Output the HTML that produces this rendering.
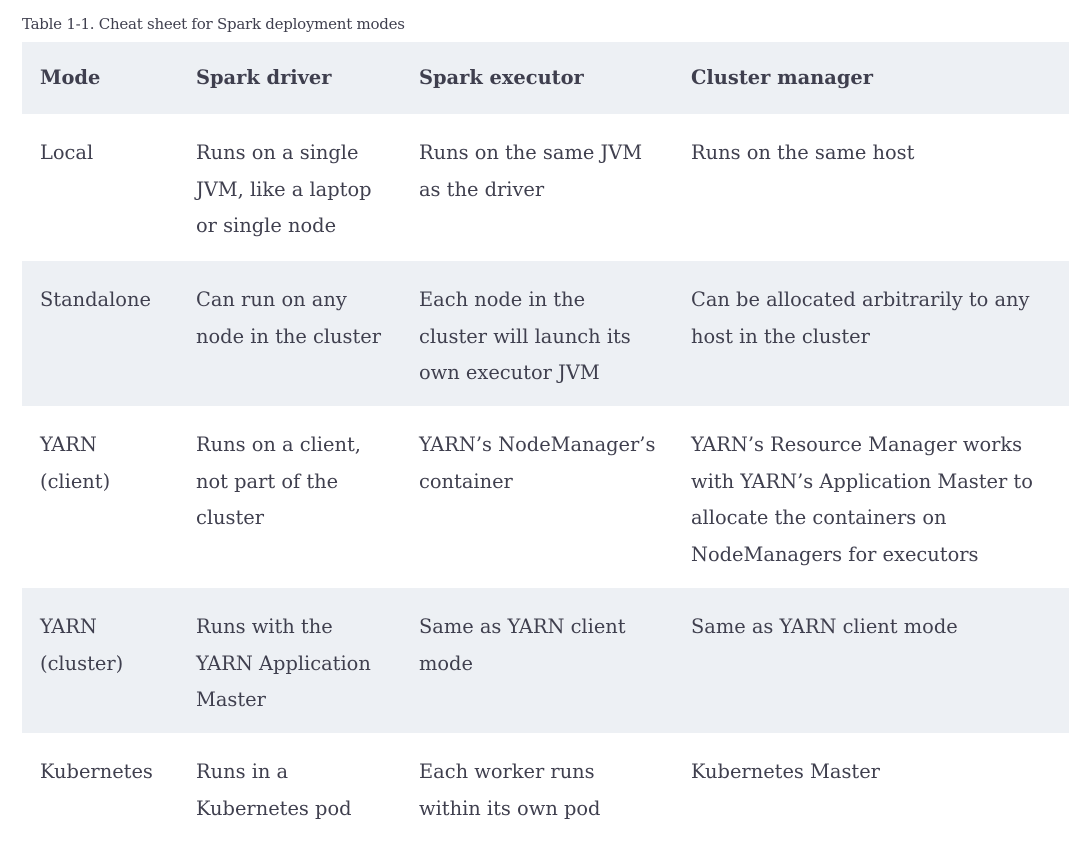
<!DOCTYPE html>
<html><head><meta charset="utf-8"><style>
html,body{margin:0;padding:0;background:#fff;width:1092px;height:847px;overflow:hidden}
body{font-family:"DejaVu Serif","Liberation Serif",serif;color:#3f3f4e}
.cap{position:absolute;left:22px;top:15px;font-size:15px;letter-spacing:-0.25px;white-space:nowrap}
.row{position:absolute;left:22px;width:1047px}
.row.g{background:#edf0f4}
.c{position:absolute;top:21px;font-size:19.4px;line-height:36.5px;white-space:nowrap;letter-spacing:0}
.h .c{font-weight:bold;top:18px}
.c1{left:18px}.c2{left:174px}.c3{left:397px}.c4{left:669px}
</style></head><body>
<div class="cap">Table 1-1. Cheat sheet for Spark deployment modes</div>
<div class="row g h" style="top:42px;height:72px">
<div class="c c1">Mode</div><div class="c c2">Spark driver</div><div class="c c3">Spark executor</div><div class="c c4">Cluster manager</div></div>
<div class="row" style="top:114px;height:147px">
<div class="c c1">Local</div><div class="c c2">Runs on a single<br>JVM, like a laptop<br>or single node</div><div class="c c3">Runs on the same JVM<br>as the driver</div><div class="c c4">Runs on the same host</div></div>
<div class="row g" style="top:261px;height:145px">
<div class="c c1">Standalone</div><div class="c c2">Can run on any<br>node in the cluster</div><div class="c c3">Each node in the<br>cluster will launch its<br>own executor JVM</div><div class="c c4">Can be allocated arbitrarily to any<br>host in the cluster</div></div>
<div class="row" style="top:406px;height:182px">
<div class="c c1">YARN<br>(client)</div><div class="c c2">Runs on a client,<br>not part of the<br>cluster</div><div class="c c3">YARN’s NodeManager’s<br>container</div><div class="c c4">YARN’s Resource Manager works<br>with YARN’s Application Master to<br>allocate the containers on<br>NodeManagers for executors</div></div>
<div class="row g" style="top:588px;height:145px">
<div class="c c1">YARN<br>(cluster)</div><div class="c c2">Runs with the<br>YARN Application<br>Master</div><div class="c c3">Same as YARN client<br>mode</div><div class="c c4">Same as YARN client mode</div></div>
<div class="row" style="top:733px;height:114px">
<div class="c c1">Kubernetes</div><div class="c c2">Runs in a<br>Kubernetes pod</div><div class="c c3">Each worker runs<br>within its own pod</div><div class="c c4">Kubernetes Master</div></div>
</body></html>
